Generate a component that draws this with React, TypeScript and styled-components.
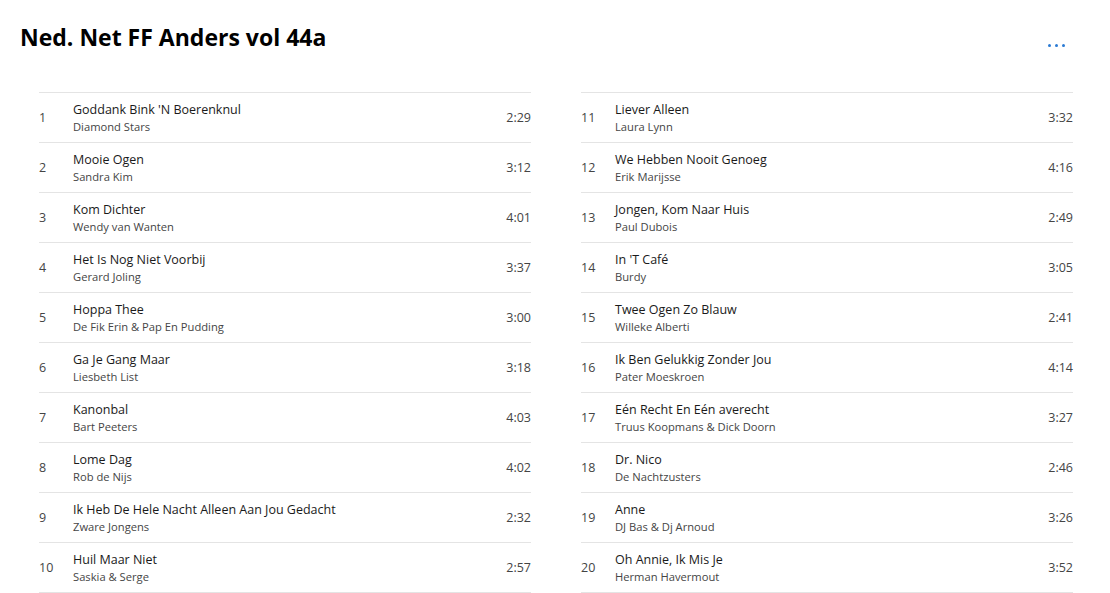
import { createGlobalStyle } from "styled-components";
import styled from "styled-components";

const GlobalStyle = createGlobalStyle`
  html, body {
    margin: 0;
    padding: 0;
    background: #ffffff;
    font-family: "Open Sans", "Noto Sans", sans-serif;
    color: #1a1a1a;
  }
`;

interface Track {
  no: number;
  title: string;
  artist: string;
  time: string;
}

const tracks: Track[] = [
  { no: 1, title: "Goddank Bink 'N Boerenknul", artist: "Diamond Stars", time: "2:29" },
  { no: 2, title: "Mooie Ogen", artist: "Sandra Kim", time: "3:12" },
  { no: 3, title: "Kom Dichter", artist: "Wendy van Wanten", time: "4:01" },
  { no: 4, title: "Het Is Nog Niet Voorbij", artist: "Gerard Joling", time: "3:37" },
  { no: 5, title: "Hoppa Thee", artist: "De Fik Erin & Pap En Pudding", time: "3:00" },
  { no: 6, title: "Ga Je Gang Maar", artist: "Liesbeth List", time: "3:18" },
  { no: 7, title: "Kanonbal", artist: "Bart Peeters", time: "4:03" },
  { no: 8, title: "Lome Dag", artist: "Rob de Nijs", time: "4:02" },
  { no: 9, title: "Ik Heb De Hele Nacht Alleen Aan Jou Gedacht", artist: "Zware Jongens", time: "2:32" },
  { no: 10, title: "Huil Maar Niet", artist: "Saskia & Serge", time: "2:57" },
  { no: 11, title: "Liever Alleen", artist: "Laura Lynn", time: "3:32" },
  { no: 12, title: "We Hebben Nooit Genoeg", artist: "Erik Marijsse", time: "4:16" },
  { no: 13, title: "Jongen, Kom Naar Huis", artist: "Paul Dubois", time: "2:49" },
  { no: 14, title: "In 'T Café", artist: "Burdy", time: "3:05" },
  { no: 15, title: "Twee Ogen Zo Blauw", artist: "Willeke Alberti", time: "2:41" },
  { no: 16, title: "Ik Ben Gelukkig Zonder Jou", artist: "Pater Moeskroen", time: "4:14" },
  { no: 17, title: "Eén Recht En Eén averecht", artist: "Truus Koopmans & Dick Doorn", time: "3:27" },
  { no: 18, title: "Dr. Nico", artist: "De Nachtzusters", time: "2:46" },
  { no: 19, title: "Anne", artist: "DJ Bas & Dj Arnoud", time: "3:26" },
  { no: 20, title: "Oh Annie, Ik Mis Je", artist: "Herman Havermout", time: "3:52" },
];

const Page = styled.div`
  width: 1110px;
  height: 593px;
  box-sizing: border-box;
  padding: 21px 37px 0 20px;
  overflow: hidden;
`;

const Header = styled.div`
  display: flex;
  justify-content: space-between;
  align-items: flex-start;
  height: 71px;
`;

const Title = styled.h1`
  margin: 0;
  font-size: 23px;
  line-height: 32px;
  font-weight: 700;
  color: #000;
`;

const MoreButton = styled.button`
  border: none;
  background: none;
  padding: 0;
  margin: 23px 8px 0 0;
  height: 4px;
  display: flex;
  gap: 4px;
  cursor: pointer;
`;

const Dot = styled.span`
  width: 3px;
  height: 3px;
  border-radius: 50%;
  background: #2a7ad4;
`;

const Columns = styled.div`
  display: grid;
  grid-template-columns: 492px 492px;
  column-gap: 50px;
  padding-left: 19px;
`;

const List = styled.div`
  border-top: 1px solid #e4e4e4;
`;

const Row = styled.div`
  display: flex;
  align-items: center;
  height: 49px;
  border-bottom: 1px solid #e4e4e4;
`;

const Num = styled.span`
  width: 34px;
  font-size: 12.5px;
  color: #444;
`;

const Info = styled.div`
  flex: 1;
  display: flex;
  flex-direction: column;
`;

const SongTitle = styled.span`
  font-size: 12.5px;
  line-height: 18px;
  color: #1a1a1a;
`;

const Artist = styled.span`
  font-size: 11.2px;
  line-height: 16px;
  color: #454545;
`;

const Time = styled.span`
  font-size: 12.5px;
  color: #444;
`;

function TrackList({ items }: { items: Track[] }) {
  return (
    <List>
      {items.map((t) => (
        <Row key={t.no}>
          <Num>{t.no}</Num>
          <Info>
            <SongTitle>{t.title}</SongTitle>
            <Artist>{t.artist}</Artist>
          </Info>
          <Time>{t.time}</Time>
        </Row>
      ))}
    </List>
  );
}

export default function App() {
  return (
    <>
      <GlobalStyle />
      <Page>
        <Header>
          <Title>Ned. Net FF Anders vol 44a</Title>
          <MoreButton aria-label="Meer">
            <Dot />
            <Dot />
            <Dot />
          </MoreButton>
        </Header>
        <Columns>
          <TrackList items={tracks.slice(0, 10)} />
          <TrackList items={tracks.slice(10)} />
        </Columns>
      </Page>
    </>
  );
}
